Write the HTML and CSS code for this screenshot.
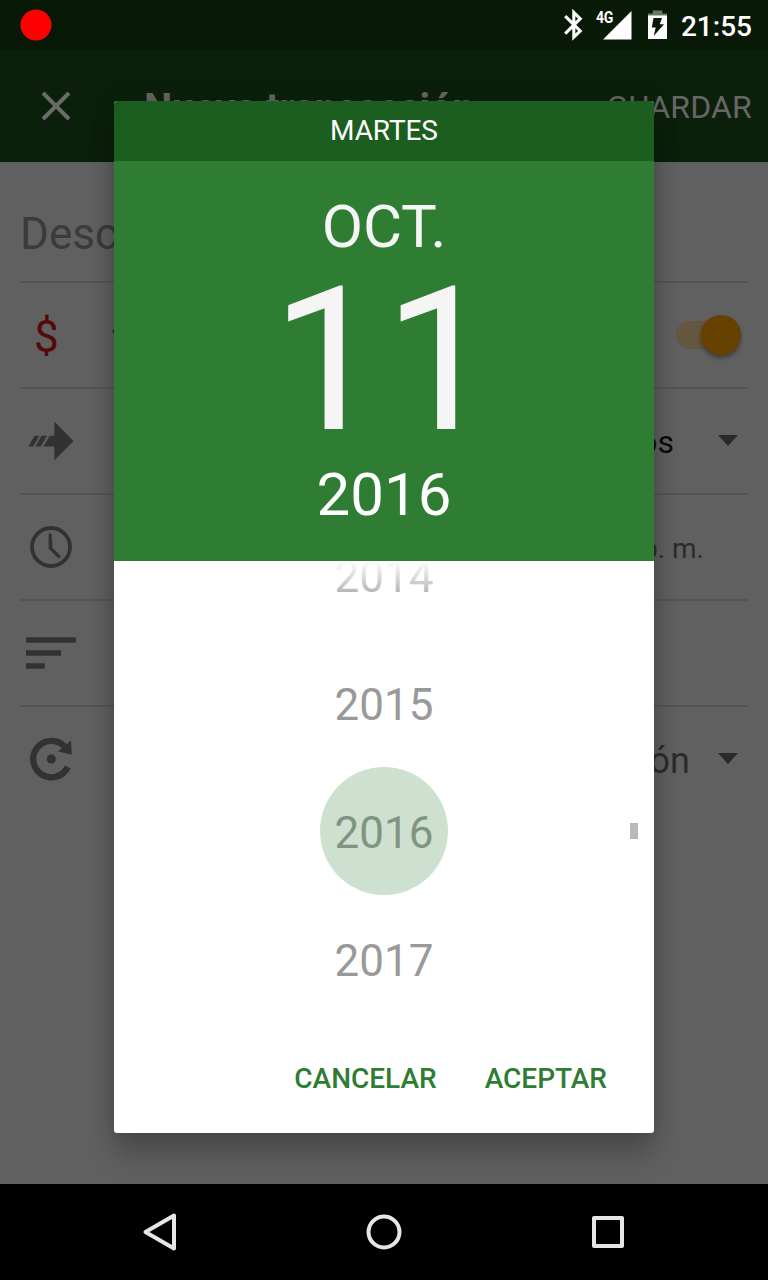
FILE: index.html
```html
<!DOCTYPE html>
<html lang="es">
<head>
<meta charset="utf-8">
<title>Nueva transacción</title>
<link rel="stylesheet" href="styles.css">
</head>
<body>
<div class="screen">
  <header class="status">
    <svg class="record" width="32" height="32" viewBox="20 9 32 32"><circle cx="36" cy="25" r="15.500" fill="#f00"/></svg>
    <div class="status-icons">
      <svg width="22" height="32" viewBox="562 9 22 32"><path d="M565.200 16.200L580.200 31L573.800 37.200V12.400L580.200 18.700L565.200 33.600" fill="none" stroke="#fff" stroke-width="3.100"/></svg>
      <div class="signal">
        <svg width="38" height="32" viewBox="595 9 38 32"><path d="M603 39.500H631.500V11Z" fill="#fff"/></svg>
        <span class="network">4G</span>
      </div>
      <svg width="20" height="32" viewBox="648 9 20 32"><path d="M652.700 10.500h9.600v3h4.700v2.500h-19v-2.500h4.700z" fill="#6c776a"/><path fill-rule="evenodd" d="M648 15.500h19v23.500h-19zM653.500 18h8.500l-2.300 6.200h4.300l-10.300 11.800 2-8.500h-3.900z" fill="#fff"/></svg>
      <span class="time">21:55</span>
    </div>
  </header>

  <div class="appbar">
    <svg class="close" width="32" height="32" viewBox="40 90 32 32"><path d="M43 93L69 119M69 93L43 119" stroke="#6b6b6b" stroke-width="4"/></svg>
    <h1 class="title">Nueva transacción</h1>
    <span class="save">GUARDAR</span>
  </div>

  <main class="form">
    <div class="field">Descripción</div>
    <div class="row">
      <span class="currency">$</span><span class="minus">-</span>
      <span class="switch"><span class="thumb"></span></span>
    </div>
    <div class="row">
      <svg width="60" height="104" viewBox="20 389 60 104" fill="#323232"><path d="M54.300 421.500L73.500 441L54.300 460.500V446.500H43.300L49.800 435.700H54.300z"/><path d="M34.500 435.700h5l-6.300 10.700h-5zM41.500 435.700h5.500l-6.300 10.700h-5.300z"/></svg>
      <span class="value account">Gastos</span>
      <svg class="caret" width="20" height="104" viewBox="718 389 20 104"><path d="M718 435h20l-10 11z" fill="#2a2a2a"/></svg>
    </div>
    <div class="row">
      <svg width="60" height="104" viewBox="20 495 60 104" fill="none" stroke="#323232"><circle cx="51" cy="547" r="19" stroke-width="3.800"/><path d="M50.200 534.500V548L59 556.500M50.800 541V547.500" stroke-width="3.200" stroke-linecap="round"/></svg>
      <span class="value hour">9:55 p. m.</span>
    </div>
    <div class="row">
      <svg width="60" height="104" viewBox="20 601 60 104" fill="#323232"><path d="M26 637.300h50v5.500H26zM26 650.300h35v5.500H26zM26 663.200h18.800v5.500H26z"/></svg>
    </div>
    <div class="row last">
      <svg width="60" height="104" viewBox="20 707 60 104"><path d="M67.800 767A18.200 18.200 0 1 1 65.500 747.500" fill="none" stroke="#323232" stroke-width="6.300"/><path d="M71 740.500L71.800 754.700L58 751.500z" fill="#323232"/><circle cx="51.300" cy="759" r="4.600" fill="#323232"/></svg>
      <span class="value repeat">Repetición</span>
      <svg class="caret" width="20" height="104" viewBox="718 707 20 104"><path d="M718 753h20l-10 11z" fill="#2a2a2a"/></svg>
    </div>
  </main>

  <nav class="navbar">
    <svg width="40" height="40" viewBox="140 1212 40 40"><path d="M174 1215.500V1248.500L145.500 1232z"/></svg>
    <svg width="40" height="40" viewBox="364 1212 40 40"><circle cx="384" cy="1232" r="15.500"/></svg>
    <svg width="40" height="40" viewBox="588 1212 40 40"><rect x="594" y="1218" width="28" height="28"/></svg>
  </nav>

  <section class="dialog">
    <div class="weekday">MARTES</div>
    <div class="date">
      <div class="month">OCT.</div>
      <div class="day">11</div>
      <div class="year">2016</div>
    </div>
    <div class="years">
      <div class="option">2014</div>
      <div class="option">2015</div>
      <div class="option selected">2016</div>
      <div class="option">2017</div>
      <span class="scrollbar"></span>
    </div>
    <div class="actions">
      <span>CANCELAR</span>
      <span>ACEPTAR</span>
    </div>
  </section>
</div>
</body>
</html>
```

FILE: styles.css
```css
* { box-sizing: border-box; }
body { margin: 0; font-family: Roboto, "Noto Sans", sans-serif; }
svg { display: block; flex: none; }

.screen {
  position: relative;
  display: flex;
  flex-direction: column;
  width: 768px;
  height: 1280px;
  overflow: hidden;
  background: #606060;
}

.status {
  display: flex;
  justify-content: space-between;
  align-items: center;
  height: 50px;
  padding: 0 16px 0 20px;
  background: #081908;
}
.status-icons { display: flex; align-items: center; }
.signal { position: relative; margin: 0 15px 0 11px; }
.network {
  position: absolute;
  left: 1px;
  top: 1px;
  color: #fff;
  font-size: 16px;
  line-height: 16px;
  font-weight: 700;
  letter-spacing: -0.4px;
  transform: scaleX(0.88);
  transform-origin: left;
}
.time {
  margin-left: 13px;
  padding-top: 3px;
  color: #fff;
  font-size: 28px;
  line-height: 32px;
  font-weight: 500;
}

.appbar {
  display: flex;
  align-items: center;
  height: 112px;
  padding: 0 16px 0 40px;
  background: #0b200b;
  color: #666;
}
.title {
  flex: 1;
  margin: 5px 0 0 72px;
  font-size: 40px;
  line-height: 48px;
  font-weight: 700;
  letter-spacing: -0.2px;
}
.save { padding-top: 1px; font-size: 32px; line-height: 38px; letter-spacing: 0.2px; }

.form { flex: 1; padding: 0 20px; }
.field {
  height: 121px;
  padding-top: 46px;
  border-bottom: 2px solid #545454;
  color: #3b3b3b;
  font-size: 44px;
  line-height: 52px;
}
.row {
  display: flex;
  align-items: center;
  height: 106px;
  border-bottom: 2px solid #545454;
}
.last { border-bottom: 0; padding-bottom: 2px; }
.currency, .minus { padding-top: 3px; color: #530a0a; font-size: 44px; line-height: 50px; }
.currency { width: 91px; padding-left: 14px; }
.minus { padding: 0 0 10px 1px; }
.switch {
  display: flex;
  align-items: center;
  width: 62px;
  height: 28px;
  margin: 0 10px 0 auto;
  border-radius: 14px;
  background: #655640;
}
.thumb {
  flex: none;
  width: 40px;
  height: 40px;
  margin-left: 25px;
  border-radius: 50%;
  background: #664100;
  box-shadow: 0 3px 4px rgba(0, 0, 0, 0.35);
}
.value { margin-left: auto; color: #2c2c2c; }
.account { margin-right: 44px; padding-top: 1px; color: #0b0b0b; font-size: 32px; }
.hour { margin-right: 44px; padding-top: 3px; font-size: 28px; }
.repeat { margin-right: 28px; padding-top: 3px; font-size: 36px; }
.caret { margin-right: 10px; }

.navbar {
  display: flex;
  justify-content: space-between;
  align-items: center;
  height: 96px;
  padding: 0 140px;
  background: #000;
}
.navbar svg { fill: none; stroke: #e6e6e6; stroke-width: 4; stroke-linejoin: round; }

/* Modal date picker, floating over the form */
.dialog {
  position: absolute;
  left: 114px;
  top: 101px;
  display: flex;
  flex-direction: column;
  width: 540px;
  height: 1032px;
  border-radius: 3px;
  background: #fff;
  box-shadow: 0 24px 26px rgba(0, 0, 0, 0.17), 0 2px 24px rgba(0, 0, 0, 0.2);
  clip-path: inset(-60px -60px -51px -60px);
  text-align: center;
}
.weekday {
  height: 60px;
  border-radius: 3px 3px 0 0;
  background: #1b5e20;
  color: #fff;
  font-size: 28px;
  line-height: 59px;
  letter-spacing: -0.1px;
}
.date { height: 400px; background: #2e7d32; color: #f5f5f5; }
.month { font-size: 60px; line-height: 131px; }
.day { font-size: 200px; line-height: 137px; }
.year { font-size: 60px; line-height: 132px; color: #fff; }

.years { position: relative; height: 460px; overflow: hidden; }
.years::before {
  content: "";
  position: absolute;
  inset: 0 0 auto;
  height: 44px;
  background: linear-gradient(#fff, rgba(255, 255, 255, 0));
}
.option {
  width: 128px;
  height: 128px;
  margin: 0 auto;
  padding-top: 2px;
  border-radius: 50%;
  color: #999;
  font-size: 44px;
  line-height: 128px;
}
.option:first-child { margin-top: -50px; }
.selected { background: #cee0d0; color: #7f957f; }
.scrollbar {
  position: absolute;
  right: 16px;
  top: 262px;
  width: 8px;
  height: 16px;
  background: #b9b9b9;
}
.actions {
  display: flex;
  justify-content: flex-end;
  align-items: center;
  gap: 48px;
  flex: 1;
  padding: 3px 47px 0 0;
  color: #2e7d32;
  font-size: 28px;
  font-weight: 500;
}
```
